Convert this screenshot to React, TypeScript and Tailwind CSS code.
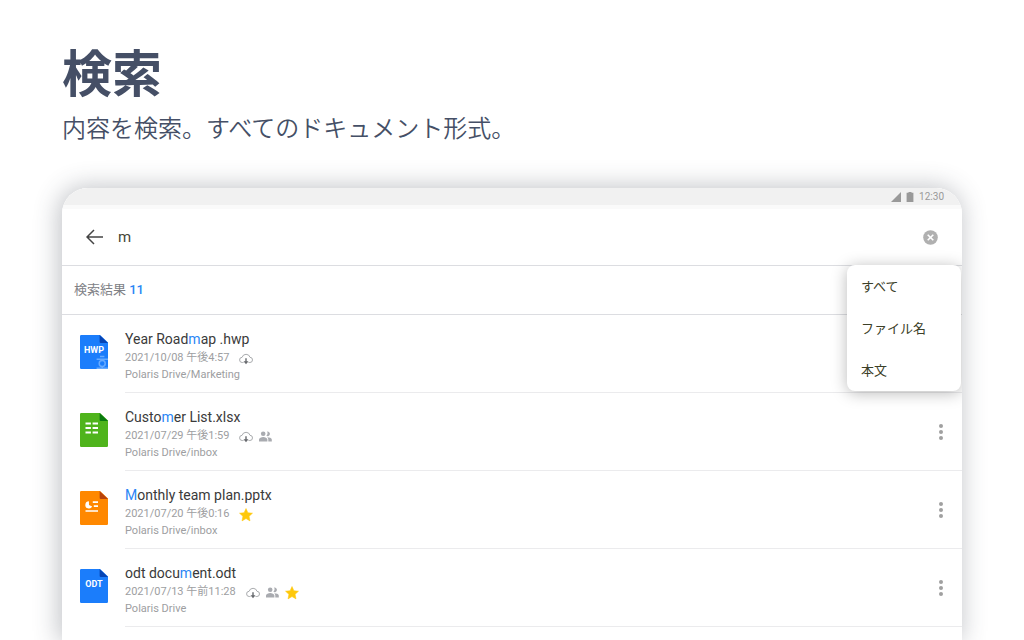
import React from "react";

type FileKind = "hwp" | "xlsx" | "pptx" | "odt";

interface FileItem {
  kind: FileKind;
  before: string;
  match: string;
  after: string;
  date: string;
  path: string;
  cloud?: boolean;
  shared?: boolean;
  starred?: boolean;
}

const files: FileItem[] = [
  { kind: "hwp", before: "Year Road", match: "m", after: "ap .hwp", date: "2021/10/08 午後4:57", path: "Polaris Drive/Marketing", cloud: true },
  { kind: "xlsx", before: "Custo", match: "m", after: "er List.xlsx", date: "2021/07/29 午後1:59", path: "Polaris Drive/inbox", cloud: true, shared: true },
  { kind: "pptx", before: "", match: "M", after: "onthly team plan.pptx", date: "2021/07/20 午後0:16", path: "Polaris Drive/inbox", starred: true },
  { kind: "odt", before: "odt docu", match: "m", after: "ent.odt", date: "2021/07/13 午前11:28", path: "Polaris Drive", cloud: true, shared: true, starred: true },
];

const filters = ["すべて", "ファイル名", "本文"];

const iconColors: Record<FileKind, [string, string]> = {
  hwp: ["#1b7dfb", "#0644b4"],
  xlsx: ["#4fb41c", "#0a7a10"],
  pptx: ["#ff8800", "#b8430c"],
  odt: ["#1b7dfb", "#0644b4"],
};

function FileIcon({ kind }: { kind: FileKind }) {
  const [body, fold] = iconColors[kind];
  return (
    <span className="relative block h-[34px] w-7 shrink-0">
      <svg viewBox="0 0 28 34" className="block h-full w-full" aria-hidden="true">
        <path d="M1.2 0H20l8 7.5v25.3a1.2 1.2 0 0 1-1.2 1.2H1.2A1.2 1.2 0 0 1 0 32.8V1.2A1.2 1.2 0 0 1 1.2 0Z" fill={body} />
        <path d="M19.6 0 28 7.9H20.8a1.2 1.2 0 0 1-1.2-1.2Z" fill={fold} />
        {kind === "hwp" && (
          <g stroke="#68abff" strokeWidth="1.500" fill="none">
            <path d="M20 21.600h4.400M16.600 24.300H28" />
            <circle cx="22.200" cy="28.600" r="3" />
            <path d="M22.200 31.600V33M16.600 33.200H28" />
          </g>
        )}
        {kind === "xlsx" && (
          <path d="M5.500 10.500h5.400M12.600 10.500H18M5.500 15h5.400M12.600 15H18M5.500 19.500h5.400M12.600 19.500H18" stroke="#fff" strokeWidth="1.800" />
        )}
        {kind === "pptx" && (
          <g>
            <path d="M8.900 10.300A3.600 3.600 0 1 0 12.200 15.400L9 14Z" fill="#fff" />
            <path d="M12.800 11.200H18M13.800 15.200H18M5.500 20H18" stroke="#fff" strokeWidth="1.700" />
          </g>
        )}
      </svg>
      {(kind === "hwp" || kind === "odt") && (
        <span className="absolute inset-x-0 top-2.5 text-center text-[9px] leading-[10px] font-bold text-white uppercase">{kind}</span>
      )}
    </span>
  );
}

function CloudIcon() {
  return (
    <svg viewBox="0 0 14 12" className="h-3 w-3.5" fill="none" aria-label="クラウド">
      <path d="M4.500 9.500H3.300a2.600 2.600 0 0 1-.2-5.200 4.100 4.100 0 0 1 7.900 0 2.600 2.600 0 0 1-.2 5.200H9.500" stroke="#a9abae" strokeWidth="1" />
      <path d="M7 5.300v4" stroke="#66696d" strokeWidth="1.400" />
      <path d="M4.500 8.300h5L7 11.200Z" fill="#66696d" />
    </svg>
  );
}

function PeopleIcon() {
  return (
    <svg viewBox="0 0 13 11" className="h-[11px] w-[13px]" fill="#a9abb0" aria-label="共有">
      <circle cx="4.200" cy="2.800" r="2.300" />
      <path d="M8.100.600a2.300 2.300 0 1 1-.7 4.200 3.500 3.500 0 0 0 .7-4.200Z" />
      <path d="M0 10.500V8.600C0 7 2.500 6.100 4.200 6.100s4.200.9 4.200 2.500v1.900ZM9.300 10.500V8.600c0-1-.4-1.700-1.100-2.300 2 0 4.600.8 4.600 2.300v1.900Z" />
    </svg>
  );
}

function StarIcon() {
  return (
    <svg viewBox="0 0 14 14" className="size-3.5" aria-label="お気に入り">
      <path d="m7 .5 1.900 4.200 4.600.5-3.400 3.100.9 4.600L7 10.600l-4 2.300.9-4.600L.5 5.200l4.600-.5Z" fill="#fec80b" stroke="#fec80b" strokeWidth=".5" strokeLinejoin="round" />
    </svg>
  );
}

function StatusBar() {
  return (
    <div className="flex h-[21px] items-start justify-end gap-[5px] border-b-4 border-[#fafafa] bg-[#f1f1f1] pr-[18px] text-[#999]">
      <svg viewBox="0 0 10 10" className="mt-1 size-2.5" fill="currentColor" aria-hidden="true">
        <path d="M10 0v10H0Z" />
      </svg>
      <svg viewBox="0 0 8 10" className="mt-1 h-2.5 w-2" fill="currentColor" aria-hidden="true">
        <path d="M2.500 0h3v.800H7.400V10H.600V.800h1.900Z" />
      </svg>
      <span className="text-[10px] leading-[17px]">12:30</span>
    </div>
  );
}

function FileRow({ file }: { file: FileItem }) {
  return (
    <li className="flex h-[78px] pl-[18px]">
      <div className="pt-5">
        <FileIcon kind={file.kind} />
      </div>
      <div className="ml-[17px] flex flex-1 items-center border-b border-[#ebebed]">
        <div className="flex-1 pt-0.5">
          <a href="#" className="block text-[14px] leading-[22px] text-[#3a3a3a]">
            {file.before}
            <span className="text-[#2a86f5]">{file.match}</span>
            {file.after}
          </a>
          <div className="flex h-[18px] items-center gap-2.5 text-[11px] text-[#9d9ea1]">
            <span>{file.date}</span>
            <span className="flex items-center gap-1.5">
              {file.cloud && <CloudIcon />}
              {file.shared && <PeopleIcon />}
              {file.starred && <StarIcon />}
            </span>
          </div>
          <p className="text-[11px] leading-[14px] text-[#9d9ea1]">{file.path}</p>
        </div>
        <button type="button" aria-label="その他" className="mr-[11px] flex h-10 w-5 items-center justify-center">
          <svg viewBox="0 0 4 16" className="h-4 w-1" fill="#a0a0a0" aria-hidden="true">
            <circle cx="2" cy="2" r="2" />
            <circle cx="2" cy="8" r="2" />
            <circle cx="2" cy="14" r="2" />
          </svg>
        </button>
      </div>
    </li>
  );
}

export default function App() {
  return (
    <main className="flex min-h-screen flex-col overflow-hidden bg-white px-[62px] font-['Roboto','Noto_Sans_CJK_JP',sans-serif]">
      <header className="h-[188px] pt-[34px] font-['Noto_Sans_CJK_JP',sans-serif] text-[#454f66]">
        <h1 className="text-[50px] leading-[72px] font-bold">検索</h1>
        <p className="text-[24px] leading-[42px] font-[350]">内容を検索。すべてのドキュメント形式。</p>
      </header>

      <section className="flex-1 rounded-t-[26px] shadow-[-2px_0_24px_2px_rgba(55,62,76,0.3)]">
        <div className="relative h-full overflow-hidden rounded-t-[26px] bg-white">
          <StatusBar />
          <form className="flex h-[57px] items-center border-b border-[#dcdde1] px-6" onSubmit={(e) => e.preventDefault()}>
            <button type="button" aria-label="戻る" className="text-[#444]">
              <svg viewBox="0 0 18 16" className="h-4 w-[18px]" fill="none" stroke="currentColor" strokeWidth="1.500" aria-hidden="true">
                <path d="M8 1 1 8l7 7M1 8h16" />
              </svg>
            </button>
            <input aria-label="検索" type="text" defaultValue="m" className="ml-3.5 min-w-0 flex-1 bg-transparent text-[15px] text-[#454538] outline-none" />
            <button type="button" aria-label="クリア">
              <svg viewBox="0 0 15 15" className="size-[15px]" aria-hidden="true">
                <circle cx="7.500" cy="7.500" r="7.300" fill="#b0b0b0" />
                <path d="m4.700 4.700 5.600 5.600M10.300 4.700l-5.600 5.600" stroke="#fff" strokeWidth="1.600" />
              </svg>
            </button>
          </form>

          <div className="flex h-[49px] items-center border-b border-[#dcdde1] px-3 text-[13px] text-[#808186]">
            <h2>
              検索結果 <span className="font-medium text-[#2a86f5]">11</span>
            </h2>
          </div>

          <ul>
            {files.map((file) => (
              <FileRow key={file.date} file={file} />
            ))}
          </ul>

          <div className="absolute top-[77px] right-px flex w-[114px] flex-col rounded-lg bg-white shadow-[0_2px_16px_rgba(0,0,0,0.28)]">
            {filters.map((label) => (
              <button key={label} type="button" className="h-[42px] px-3.5 pt-0.5 text-left text-[13px] text-[#3c4028]">
                {label}
              </button>
            ))}
          </div>
        </div>
      </section>
    </main>
  );
}
